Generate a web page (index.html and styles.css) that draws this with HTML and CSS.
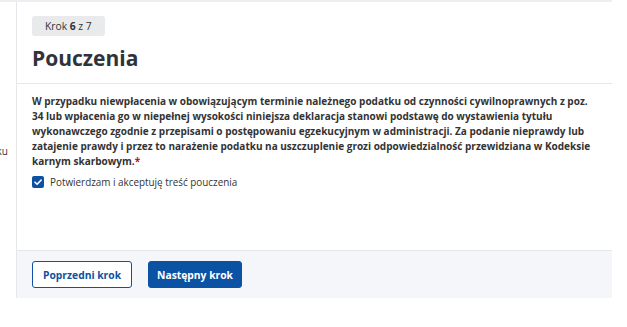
FILE: index.html
```html
<!DOCTYPE html>
<html lang="pl">
<head>
    <meta charset="utf-8" />
    <title>Pouczenia</title>
    <link rel="stylesheet" href="styles.css">
</head>
<body>
    <div class="topbar"></div>
    <div class="layout">
        <nav class="side">
            <div class="side-item"><span>Obliczenie podatku</span></div>
        </nav>
        <main class="panel">
            <header class="panel-head">
                <span class="step">Krok <b>6</b> z 7</span>
                <h1>Pouczenia</h1>
            </header>
            <section class="panel-body">
                <p class="notice">W przypadku niewpłacenia w obowiązującym terminie należnego podatku od czynności cywilnoprawnych z poz. 34 lub wpłacenia go w niepełnej wysokości niniejsza deklaracja stanowi podstawę do wystawienia tytułu wykonawczego zgodnie z przepisami o postępowaniu egzekucyjnym w administracji. Za podanie nieprawdy lub zatajenie prawdy i przez to narażenie podatku na uszczuplenie grozi odpowiedzialność przewidziana w Kodeksie karnym skarbowym.<span class="req">*</span></p>
                <label class="check">
                    <span class="box">
                        <svg width="12" height="12" viewBox="0 0 12 12"><path d="M3 6.2l2.1 2.1L9.2 4" fill="none" stroke="#fff" stroke-width="1.6" stroke-linecap="round" stroke-linejoin="round"/></svg>
                    </span>
                    Potwierdzam i akceptuję treść pouczenia
                </label>
            </section>
            <footer class="panel-foot">
                <button class="btn btn-outline">Poprzedni krok</button>
                <button class="btn btn-primary">Następny krok</button>
            </footer>
        </main>
    </div>
</body>
</html>
```
FILE: styles.css
```css
html, body {
    margin: 0;
    padding: 0;
    background: #fff;
    font-family: "Open Sans", sans-serif;
    color: #333;
}
.topbar {
    width: 612px;
    height: 2px;
    background: #eceef2;
}
.layout {
    display: flex;
    width: 612px;
}
.side {
    width: 16px;
    overflow: hidden;
    border-right: 1px solid #e6e7ea;
}
.side-item {
    display: flex;
    justify-content: flex-end;
    margin-top: 142px;
    font-size: 10px;
    white-space: nowrap;
    color: #333;
}
.side-item span {
    margin-right: 8px;
}
.panel {
    flex: 1;
}
.panel-head {
    padding: 11px 15px 11px;
    border-bottom: 1px solid #e6e7ea;
}
.step {
    display: inline-block;
    background: #e9eaec;
    border-radius: 3px;
    padding: 3px 13px;
    font-size: 10.3px;
    line-height: 14px;
}
.step b {
    font-weight: 700;
}
h1 {
    margin: 8px 0 0;
    font-family: "Open Sans", sans-serif;
    font-size: 21px;
    font-weight: 700;
    color: #2f333a;
    line-height: 28px;
}
.panel-body {
    padding: 10px 13px 61px 15px;
}
.notice {
    margin: 0;
    font-size: 10px;
    font-weight: 700;
    line-height: 15px;
}
.req {
    color: #c8102e;
}
.check {
    display: flex;
    align-items: center;
    gap: 6px;
    margin-top: 6px;
    font-size: 9.9px;
    line-height: 14px;
}
.box {
    display: flex;
    width: 12px;
    height: 12px;
    border-radius: 2px;
    background: #0d52a2;
}
.panel-foot {
    display: flex;
    gap: 16px;
    padding: 10px 15px;
    background: #f4f6f9;
    border-top: 1px solid #e6e7ea;
}
.btn {
    height: 27px;
    padding: 0 10px;
    border-radius: 3px;
    font-family: "Open Sans", sans-serif;
    font-size: 10.3px;
    font-weight: 700;
}
.btn-outline {
    background: #fff;
    color: #0d52a2;
    border: 1px solid #0d52a2;
}
.btn-primary {
    padding: 0 8px;
    background: #0b52a4;
    color: #fff;
    border: 1px solid #0b52a4;
}
```
